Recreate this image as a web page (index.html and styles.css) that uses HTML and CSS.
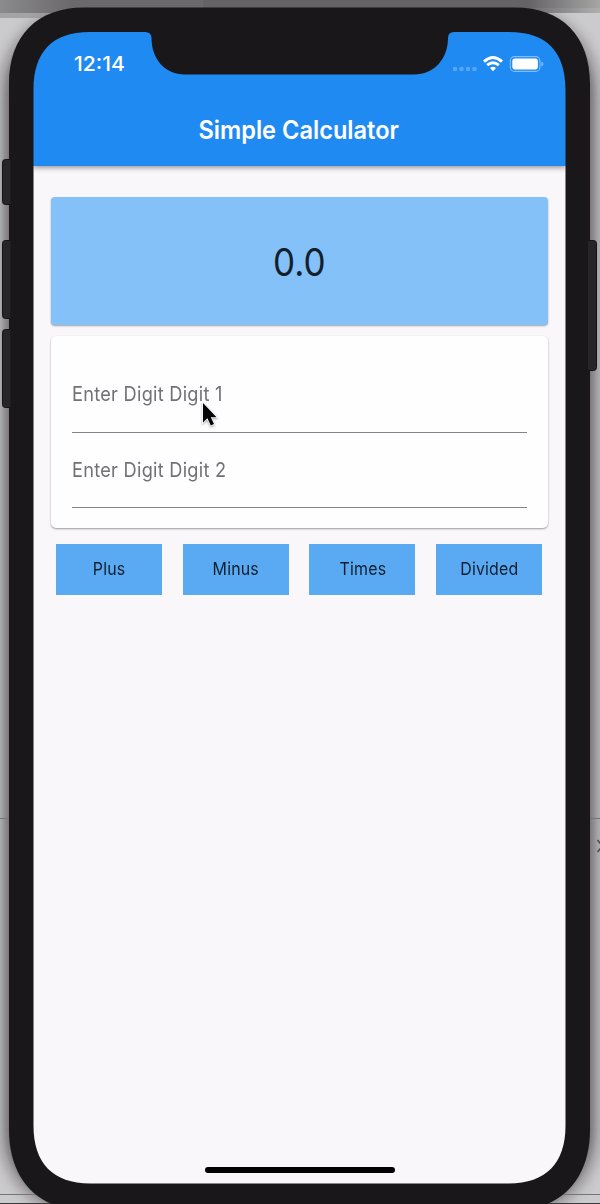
FILE: index.html
```html
<!DOCTYPE html>
<html lang="en">
<head>
<meta charset="utf-8">
<title>Simple Calculator</title>
<link rel="stylesheet" href="styles.css">
</head>
<body>
<main class="desktop">
  <svg class="backdrop" viewBox="0 0 600 1204" aria-hidden="true">
    <defs>
      <linearGradient id="top" x1="0" x2="600" gradientUnits="userSpaceOnUse"><stop stop-color="#8b8a8c"/><stop offset=".12" stop-color="#6b696b"/><stop offset=".88" stop-color="#6b696b"/><stop offset="1" stop-color="#b0afb0"/></linearGradient>
      <filter id="soft" x="-10%" y="-10%" width="120%" height="120%"><feGaussianBlur stdDeviation="9"/></filter>
    </defs>
    <rect width="600" height="1204" fill="#cbcacc"/>
    <rect x="6" y="12" width="587" height="1200" rx="80" fill="#1b191b" opacity=".72" filter="url(#soft)"/>
    <rect width="600" height="13" fill="url(#top)"/>
    <rect y="13" width="60" height="5" fill="#8b8a8c" opacity=".6"/>
    <rect x="203" width="397" height="8" fill="#000" opacity=".05"/>
    <path d="M0 818.500h10M590 818.500h10M0 1194.500h60M540 1194.500h60" stroke="#757476"/>
    <path d="M0 1203.500h600" stroke="#39383a"/>
    <path d="M597.500 840l5 6-5 6" fill="none" stroke="#4b4a4c" stroke-width="1.500"/>
  </svg>

  <section class="screen">
    <header class="appbar">
      <div class="status">
        <span class="time"><span class="fit fit-time">12:14</span></span>
        <svg class="indicators" width="92" height="18" viewBox="0 0 92 18">
          <g fill="#56a7f6"><rect x="1" y="12" width="4" height="4" rx=".8"/><rect x="7.500" y="12" width="4" height="4" rx=".8"/><rect x="14" y="12" width="4" height="4" rx=".8"/><rect x="20.500" y="12" width="4" height="4" rx=".8"/></g>
          <g fill="none" stroke="#fff" stroke-width="2.900"><path d="M32 6.600Q41 -1.600 50 6.600"/><path d="M35.200 10.200Q41 5.100 46.800 10.200"/></g>
          <path d="M38 13Q41 10.300 44 13L41 16.200Z" fill="#fff"/>
          <rect x="58.300" y="1.600" width="29.600" height="14.800" rx="4" fill="none" stroke="#82bffa" stroke-width="1.100"/>
          <rect x="60.300" y="3.600" width="25.600" height="10.800" rx="2.300" fill="#fff"/>
          <path d="M89.400 6.400q2 .7 2 2.600t-2 2.600z" fill="#82bffa"/>
        </svg>
      </div>
      <h1 class="title"><span class="fit fit-title">Simple Calculator</span></h1>
    </header>

    <div class="content">
      <div class="result"><span class="fit fit-result">0.0</span></div>
      <div class="form">
        <div class="field"><span class="fit fit-field">Enter Digit Digit 1</span></div>
        <div class="field"><span class="fit fit-field">Enter Digit Digit 2</span></div>
      </div>
      <div class="actions">
        <button class="action"><span class="fit fit-action">Plus</span></button>
        <button class="action"><span class="fit fit-action">Minus</span></button>
        <button class="action"><span class="fit fit-action">Times</span></button>
        <button class="action"><span class="fit fit-action">Divided</span></button>
      </div>
    </div>
    <div class="home"></div>
  </section>

  <svg class="bezel" viewBox="0 0 600 1204" aria-hidden="true">
    <path fill="#191719" fill-rule="evenodd" d="M84 7.500H515C562 7.500 590 36 590 84V1130C590 1178 562 1210 515 1210H84C37 1210 9 1178 9 1130V84C9 36 37 7.500 84 7.500Z
    M90 32C52 32 33.500 52 33.500 90V1126C33.500 1163 53 1183.500 90 1183.500H509C546 1183.500 565.500 1163 565.500 1126V90C565.500 52 547 32 509 32H454Q448 32 448 38C448 59 434 74.500 414 74.500H185C165 74.500 151.500 59 151.500 38Q151.500 32 145 32Z"/>
    <g fill="#272527" stroke="#141214">
      <path d="M10.500 159.500H5.500q-3 0-3 3v39q0 3 3 3h5"/>
      <path d="M10.500 240.500H5.500q-3 0-3 3v72q0 3 3 3h5"/>
      <path d="M10.500 329.500H5.500q-3 0-3 3v72q0 3 3 3h5"/>
      <path d="M588 240.500h5.500q3 0 3 3v124q0 3-3 3H588"/>
    </g>
  </svg>
  <svg class="cursor" width="22" height="30" viewBox="0 0 22 30" aria-hidden="true">
    <path d="M3 2V21.500L7.400 17.300L10.800 24.500L14 23L10.800 16.200H16.600Z" fill="#050505" stroke="#fff" stroke-width="1.600" paint-order="stroke"/>
  </svg>
</main>
</body>
</html>
```
FILE: styles.css
```css
* { box-sizing: border-box; }
body { margin: 0; font-family: Inter, "Liberation Sans", sans-serif; }
.desktop { position: relative; width: 600px; height: 1204px; overflow: hidden; padding: 32px 34px 20px 33px; }
.backdrop, .bezel { position: absolute; inset: 0; width: 600px; height: 1204px; pointer-events: none; }
.screen { position: relative; width: 533px; height: 1152px; display: flex; flex-direction: column; background: #f9f7fa; border-radius: 50px; }
.fit { display: inline-block; white-space: nowrap; }
.appbar { height: 133.5px; flex: none; background: #1f8af2; border-radius: 45px 45px 0 0; box-shadow: 0 2px 5px rgba(0, 0, 0, .38); color: #fff; }
.status { height: 64px; padding: 0 22px 0 41px; display: flex; justify-content: space-between; align-items: center; }
.time { font-size: 20.5px; font-weight: 550; }
.fit-time { transform: translateY(-1px) scaleX(1.03); transform-origin: left; }
.title { margin: 0; height: 68px; line-height: 68px; text-align: center; font-size: 25px; font-weight: 600; }
.fit-title { transform: translateX(-.5px) scaleX(.944); }
.content { flex: 1; padding: 31px 18.5px 0 18px; }
.result { height: 128.5px; display: flex; align-items: center; justify-content: center; background: #85c1f9; border-radius: 4px; box-shadow: 0 1px 2px rgba(0, 0, 0, .35); color: #12202b; font-size: 38.5px; }
.fit-result { transform: translate(.5px, .5px) scaleX(.91); }
.form { margin-top: 11px; height: 192px; padding: 21px 20.5px 0 21px; background: #fefdff; border-radius: 5px; box-shadow: 0 1px 2px rgba(0, 0, 0, .38); }
.field { height: 75.5px; border-bottom: 1px solid #858487; color: #727174; font-size: 20.2px; line-height: 73px; }
.fit-field { letter-spacing: .3px; transform: scaleX(.9); transform-origin: left; }
.actions { margin-top: 15.5px; padding: 0 5.4px 0 5.2px; display: grid; grid-template-columns: repeat(4, 106px); justify-content: space-between; }
.action { height: 51px; padding: 0 0 1px; border: 0; background: #5aa9f3; color: #0e1e2d; font: 17.7px Inter, sans-serif; }
.fit-action { letter-spacing: .2px; transform: scaleX(.9); }
.home { width: 190px; height: 6px; margin: 0 auto 11.5px; position: relative; flex: none; border-radius: 3px; background: #000; }
.cursor { position: absolute; left: 200px; top: 401px; filter: drop-shadow(0 1px 1px rgba(0, 0, 0, .35)); }
```
